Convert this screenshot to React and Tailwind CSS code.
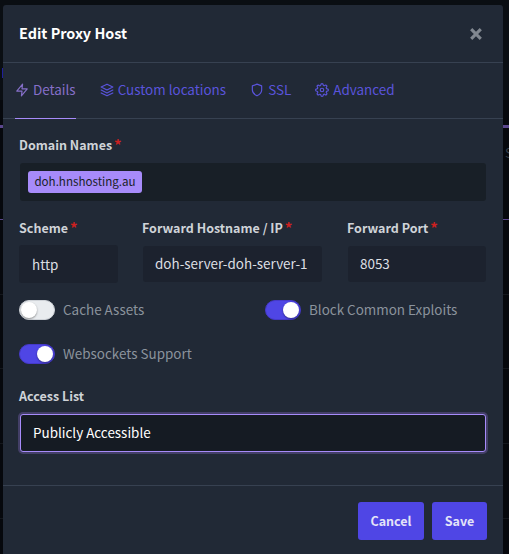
import React from "react";
import { FiZap, FiLayers, FiShield, FiSettings } from "react-icons/fi";

function Label({ children, required }) {
  return (
    <div className="flex h-6 gap-[3px] whitespace-nowrap text-[12.5px] leading-[23px] font-bold text-[#cfd3d8]">
      <span>{children}</span>
      {required && <span className="-ml-px text-[15px] text-[#cd201f]">*</span>}
    </div>
  );
}

function Tab({ icon: Icon, children, active }) {
  return (
    <div
      className={
        "flex h-[56px] items-center gap-1 border-b whitespace-nowrap " +
        (active ? "border-[#a78bfa] text-[#866fc9]" : "border-transparent text-[#5a54dc]")
      }
    >
      <Icon className="mb-px size-[14px] shrink-0" />
      <span className="pb-[3px]">{children}</span>
    </div>
  );
}

function Toggle({ on, children }) {
  return (
    <div className="flex h-5 items-center gap-2 whitespace-nowrap text-[#8b939d]">
      <span
        className={
          "flex h-5 w-9 items-center rounded-full border px-px " +
          (on ? "justify-end border-[#4539c9] bg-[#4f46e5]" : "justify-start border-[#cfd3d8] bg-[#e9ecef]")
        }
      >
        <span className="size-4 rounded-full bg-white shadow-[0_1px_2px_rgba(0,0,0,0.4)]" />
      </span>
      <span className="pb-px">{children}</span>
    </div>
  );
}

export default function App() {
  return (
    <div className="relative h-[554px] w-[509px] overflow-hidden bg-[#06080d] px-[3px] pt-[5px] font-['Noto_Sans_CJK_SC','Noto_Sans',sans-serif] text-[13.45px]">
      <div className="absolute inset-x-0 top-0 h-[100px] bg-[#0a0e13]" />
      <div className="absolute inset-x-0 top-[125px] h-[3px] bg-[#5b478d]" />
      <div className="absolute inset-x-0 top-[219px] h-px bg-[#5b478d]" />
      <div className="absolute top-[68px] left-[2px] h-[10px] w-px bg-[#20209a]" />
      <div className="absolute top-[145px] left-[505px] text-[13px] leading-4 text-[#39414c]">S</div>
      <div className="absolute inset-x-0 top-[294px] h-px bg-[#14171d]" />
      <div className="absolute inset-x-0 top-[368px] h-px bg-[#14171d]" />
      <div className="absolute inset-x-0 top-[443px] h-px bg-[#14171d]" />
      <div className="absolute inset-x-0 top-[518px] h-px bg-[#14171d]" />

      <div className="relative flex h-[549px] w-[500px] flex-col rounded-t-[3px] bg-[#212936]">
        <div className="flex h-[58px] shrink-0 items-center justify-between border-b border-[#374151] pr-[21px] pl-4">
          <h1 className="pb-[2px] text-[14.4px] font-bold text-white">Edit Proxy Host</h1>
          <svg viewBox="0 0 12 12" className="size-3" stroke="#818790" strokeWidth="3.1" fill="none">
            <path d="M1.2 1.2 10.8 10.8M10.8 1.2 1.2 10.8" />
          </svg>
        </div>
        <div className="flex h-[56px] shrink-0 gap-6 border-b border-[#374151] pl-3">
          <Tab icon={FiZap} active>Details</Tab>
          <Tab icon={FiLayers}>Custom locations</Tab>
          <Tab icon={FiShield}>SSL</Tab>
          <Tab icon={FiSettings}>Advanced</Tab>
        </div>

        <div className="flex h-[366px] shrink-0 flex-col px-4 pt-[14px]">
          <Label required>Domain Names</Label>
          <div className="mt-[6px] ml-px flex h-[38px] w-[466px] items-center rounded-[3px] bg-[#181f27] pl-2">
            <span className="flex h-[22px] w-[114px] items-center justify-center rounded-[3px] bg-[#a78bfa] text-[11.6px] whitespace-nowrap text-[#181f27]">
              doh.hnshosting.au
            </span>
          </div>
          <div className="mt-[15px] flex">
            <div className="w-[123px]">
              <Label required>Scheme</Label>
              <div className="mt-[5px] flex h-[38px] w-[99px] items-center rounded-[3px] bg-[#1c222e] pl-[13px] text-[#dcdfe3]">http</div>
            </div>
            <div className="w-[205px]">
              <Label required>Forward Hostname / IP</Label>
              <div className="mt-[6px] ml-px flex h-9 w-[179px] items-center rounded-[3px] bg-[#1c222e] pb-px pl-3 whitespace-nowrap text-[#dcdfe3]">doh-server-doh-server-1</div>
            </div>
            <div className="w-[139px]">
              <Label required>Forward Port</Label>
              <div className="mt-[6px] ml-px flex h-9 items-center rounded-[3px] bg-[#1c222e] pb-px pl-3 text-[#dcdfe3]">8053</div>
            </div>
          </div>
          <div className="mt-[17px] grid grid-cols-[246px_1fr] gap-y-[24px]">
            <Toggle>Cache Assets</Toggle>
            <Toggle on>Block Common Exploits</Toggle>
            <Toggle on>Websockets Support</Toggle>
          </div>
          <div className="mt-[20px]">
            <Label>Access List</Label>
          </div>
          <div className="mt-[6px] ml-px flex h-[38px] w-[466px] shrink-0 items-center rounded-[3px] border border-[#a78bfa] bg-[#151b23] pb-px pl-3 text-white shadow-[0_0_0_2px_#433f67]">
            Publicly Accessible
          </div>
        </div>

        <div className="flex flex-1 items-start justify-end gap-2 border-t border-[#374151] pt-4 pr-4 text-[12.5px] font-bold text-[#e4e4f8]">
          <button className="h-[38px] w-[66px] rounded-[3px] bg-[#4f46e5]">Cancel</button>
          <button className="h-[38px] w-[55px] rounded-[3px] bg-[#4f46e5]">Save</button>
        </div>
      </div>
    </div>
  );
}
